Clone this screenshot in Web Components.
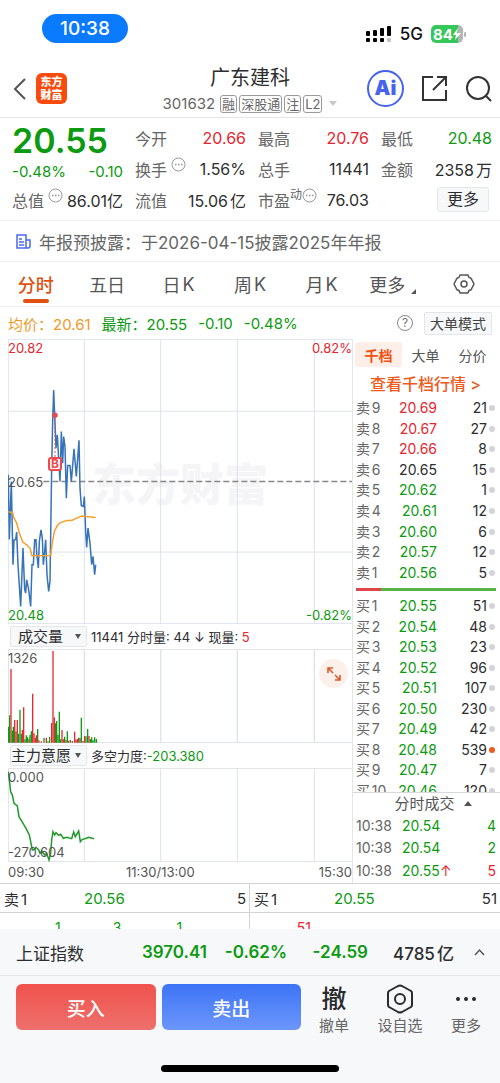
<!DOCTYPE html>
<html lang="zh-CN">
<head>
  <meta charset="utf-8">
  <meta name="viewport" content="width=device-width, initial-scale=1">
  <title>广东建科 301632</title>
  <style>
    :root {
      --up: #e8252f;
      --down: #0c9a10;
      --ink: #2d2d2f;
      --muted: #666;
      --brand: #f0500f;
      --line: #e4e5e8;
      --panel: #f6f8fa;
    }
    body {
      margin: 0;
      min-height: 100vh;
      display: flex;
      flex-direction: column;
      color: var(--ink);
      background: #fff;
      font-family: Inter, "Noto Sans CJK SC", sans-serif;
      font-size: 16px;
    }
    main {
      display: flex;
    }
    .charts {
      flex: 1;
      min-width: 0;
      padding-left: 8px;
    }
    .book {
      flex: 0 0 148px;
      border-left: 1px solid var(--line);
      box-sizing: border-box;
    }
    action-bar {
      flex: 1;
    }
  </style>
</head>
<body>
  <status-bar></status-bar>
  <stock-header code="301632">广东建科</stock-header>
  <quote-panel></quote-panel>
  <notice-bar>年报预披露：于2026-04-15披露2025年年报</notice-bar>
  <period-tabs></period-tabs>
  <average-line></average-line>
  <main>
    <div class="charts">
      <price-chart></price-chart>
      <chart-head options="成交量,成交额" label="副图指标一">11441 分时量: 44 ↓ 现量: <b style="color: var(--up); font-weight: 400">5</b></chart-head>
      <volume-chart></volume-chart>
      <chart-head options="主力意愿,MACD" label="副图指标二">多空力度:<b style="color: var(--down); font-weight: 400">-203.380</b></chart-head>
      <force-chart></force-chart>
      <time-axis></time-axis>
    </div>
    <div class="book">
      <order-book></order-book>
      <tick-list></tick-list>
    </div>
  </main>
  <best-quote></best-quote>
  <index-bar></index-bar>
  <action-bar></action-bar>

  <script>
    (function () {
      const Quotes = {
        sell: [
          [9, "20.69", 21, "up"],
          [8, "20.67", 27, "up"],
          [7, "20.66", 8, "up"],
          [6, "20.65", 15, ""],
          [5, "20.62", 1, "down"],
          [4, "20.61", 12, "down"],
          [3, "20.60", 6, "down"],
          [2, "20.57", 12, "down"],
          [1, "20.56", 5, "down"],
        ],
        buy: [
          [1, "20.55", 51, "down"],
          [2, "20.54", 48, "down"],
          [3, "20.53", 23, "down"],
          [4, "20.52", 96, "down"],
          [5, "20.51", 107, "down"],
          [6, "20.50", 230, "down"],
          [7, "20.49", 42, "down"],
          [8, "20.48", 539, "down"],
          [9, "20.47", 7, "down"],
          [10, "20.46", 120, "down"],
        ],
      };

      // Chart data is kept in the units of each chart's viewBox
      const PRICE =
        "25,420 28,614 34,440 39,690 42,616 47,614 50,592 54,690 62,815 69,640 74,765 77,775 80,735 86,765 92,815 96,690 100,690 104,615 108,615 110,655 115,700 118,620 123,585 127,610 130,690 134,650 137,615 141,720 146,770 150,740 155,400 158,260 161,165 164,240 168,340 172,300 177,390 180,440 184,290 188,385 191,305 195,335 199,490 203,392 210,392 214,440 222,342 229,425 237,316 240,460 244,513 250,515 253,485 257,590 260,638 264,580 270,625 275,690 279,665 284,720 287,690";
      const AVERAGE =
        "25,530 38,535 42,550 50,565 58,595 68,622 80,630 90,640 96,663 152,662 156,630 163,590 172,572 180,564 200,557 215,557 230,550 245,544 287,548";
      const FORCE =
        "25,455 28,480 32,515 37,525 42,550 52,558 57,590 66,605 78,625 88,645 92,665 97,690 104,688 108,682 116,690 120,700 126,693 134,705 140,700 147,720 152,700 155,660 159,635 164,645 168,638 176,646 182,643 190,655 200,652 215,656 221,636 226,650 236,633 241,665 247,658 255,656 266,652 282,656";
      const VOLUME = [
        [26, 320, "d"], [29, 286, "d"], [33, 147, "u"], [37, 332, "d"],
        [40, 320, "d"], [44, 300, "u"], [48, 334, "d"], [52, 300, "u"],
        [56, 341, "d"], [60, 269, "d"], [64, 342, "d"], [67, 330, "u"],
        [71, 262, "u"], [75, 358, "d"], [79, 346, "d"], [83, 352, "d"],
        [87, 358, "u"], [90, 345, "d"], [94, 334, "d"], [98, 221, "u"],
        [102, 340, "u"], [106, 354, "u"], [109, 346, "u"], [113, 327, "d"],
        [117, 361, "u"], [124, 364, "u"], [132, 354, "d"], [139, 353, "u"],
        [144, 364, "d"], [149, 350, "d"], [155, 309, "u"], [159, 93, "u"],
        [163, 292, "u"], [167, 310, "d"], [170, 303, "d"], [174, 344, "d"],
        [178, 275, "d"], [182, 358, "d"], [186, 330, "u"], [190, 358, "u"],
        [194, 350, "d"], [198, 360, "u"], [202, 334, "d"], [206, 362, "u"],
        [211, 360, "d"], [217, 363, "u"], [224, 335, "u"], [228, 359, "u"],
        [232, 357, "u"], [236, 353, "d"], [240, 354, "u"], [244, 293, "d"],
        [249, 363, "u"], [254, 348, "u"], [258, 349, "d"], [263, 327, "d"],
        [267, 348, "u"], [271, 358, "d"], [275, 352, "d"], [279, 360, "d"],
        [284, 352, "d"], [289, 357, "d"],
      ];

      const SHARED = `
        *, :host { box-sizing: border-box; }
        :host { display: block; }
        button, select, input { font: inherit; color: inherit; margin: 0; padding: 0; border: 0; background: none; }
        button { cursor: pointer; }
        a { color: inherit; text-decoration: none; }
        svg { display: block; }
        .up { color: var(--up); }
        .down { color: var(--down); }
      `;

      class Panel extends HTMLElement {
        constructor() {
          super();
          const shadowRoot = this.attachShadow({ mode: "open" });
          shadowRoot.innerHTML = `<style>${SHARED}${this.styles()}</style>${this.markup()}`;
        }
        styles() {
          return "";
        }
        markup() {
          return "";
        }
      }

      class StatusBar extends Panel {
        styles() {
          return `
            :host {
              display: flex;
              justify-content: space-between;
              height: 60px;
              padding: 14px 34px 0 42px;
            }
            time {
              width: 86px;
              height: 29px;
              line-height: 29px;
              border-radius: 15px;
              text-align: center;
              font-size: 19px;
              font-weight: 500;
              color: #fff;
              background: #0a7aff;
            }
            .right {
              display: flex;
              align-items: center;
              gap: 8px;
              height: 40px;
              font-size: 17px;
              font-weight: 500;
              color: #111;
            }
            .battery {
              display: flex;
              align-items: center;
              gap: 1px;
            }
            .level {
              display: flex;
              align-items: center;
              justify-content: center;
              width: 32px;
              height: 18px;
              border-radius: 5px;
              color: #fff;
              font-size: 15px;
              font-weight: 700;
              background: linear-gradient(90deg, #35c759 84%, #b5b5b8 84%);
            }
            .tip {
              width: 2px;
              height: 5px;
              border-radius: 1px;
              background: #b5b5b8;
            }
          `;
        }
        markup() {
          return `
            <time>10:38</time>
            <div class="right">
              <svg width="26" height="18" fill="#000">
                <rect x="0" y="6" width="4" height="5" rx="1"/><rect x="7" y="5" width="4" height="6" rx="1"/>
                <rect x="14" y="3" width="4" height="8" rx="1"/><rect x="21" y="1" width="4" height="10" rx="1"/>
                <rect x="0" y="13" width="4" height="4" rx="1"/><rect x="7" y="13" width="4" height="4" rx="1"/>
                <rect x="14" y="13" width="4" height="4" rx="1"/><rect x="21" y="13" width="4" height="4" rx="1" fill="#c4c4c6"/>
              </svg>
              <span>5G</span>
              <span class="battery">
                <span class="level">84<svg width="8" height="12"><path d="M5 0 0 7h3L2 12l6-7H4z" fill="#fff"/></svg></span>
                <span class="tip"></span>
              </span>
            </div>
          `;
        }
      }

      class StockHeader extends Panel {
        styles() {
          return `
            :host {
              display: grid;
              grid-template-columns: 1fr auto 1fr;
              align-items: center;
              height: 58px;
              padding: 0 8px;
              border-bottom: 1px solid var(--line);
            }
            .left, .right, .sub {
              display: flex;
              align-items: center;
            }
            .left { gap: 9px; padding-left: 5px; }
            .right { gap: 17px; justify-content: flex-end; }
            .logo {
              width: 31px;
              height: 31px;
              padding-top: 2px;
              border-radius: 6px;
              background: #fa4b0c;
              color: #fff;
              font: 900 11px/13px "Noto Sans CJK SC", sans-serif;
              text-align: center;
            }
            .logo span { display: block; }
            h1 {
              margin: 0;
              font-size: 20px;
              font-weight: 400;
              line-height: 30px;
              text-align: center;
            }
            .sub {
              gap: 2px;
              height: 22px;
              color: var(--muted);
              font-size: 15px;
            }
            .code { margin-right: 3px; }
            .sub i {
              padding: 0 1px;
              border: 1px solid #999;
              border-radius: 3px;
              font-style: normal;
              font-size: 13px;
              line-height: 16px;
            }
            .caret {
              margin-left: 5px;
              border: 4px solid transparent;
              border-top: 5px solid #c8c8c8;
              border-bottom: 0;
            }
            .ai {
              display: grid;
              place-items: center;
              width: 37px;
              height: 37px;
              border: 2px solid #4763ee;
              border-radius: 50%;
              color: #4763ee;
              font: 900 20px/33px Inter, sans-serif;
            }
          `;
        }
        markup() {
          return `
            <div class="left">
              <button aria-label="返回"><svg width="14" height="24" fill="none" stroke="#555" stroke-width="2"><path d="M12 2 2 12l10 10"/></svg></button>
              <div class="logo"><span>东方</span><span>财富</span></div>
            </div>
            <div>
              <h1><slot></slot></h1>
              <div class="sub"><span class="code">${this.getAttribute("code")}</span><i>融</i><i>深股通</i><i>注</i><i>L2</i><span class="caret"></span></div>
            </div>
            <div class="right">
              <button class="ai">Ai</button>
              <button aria-label="分享"><svg width="27" height="27" fill="none" stroke="#333" stroke-width="2"><path d="M12 2H2v23h23V15M16 2h9v9M25 2 12 15"/></svg></button>
              <button aria-label="搜索"><svg width="27" height="28" fill="none" stroke="#333" stroke-width="2"><circle cx="13" cy="13" r="11"/><path d="m21 21 5 5"/></svg></button>
            </div>
          `;
        }
      }

      const DOTS = `<svg width="15" height="15" fill="none" stroke="#999"><circle cx="7.500" cy="7.500" r="6.500"/><path d="M4 7.500h1.500M7 7.500h1.500M10 7.500h1.500" stroke-width="1.500"/></svg>`;

      class QuotePanel extends Panel {
        styles() {
          return `
            :host {
              display: grid;
              grid-template-columns: repeat(4, 1fr);
              column-gap: 12px;
              height: 103px;
              padding: 4px 8px 0 12px;
              border-bottom: 1px solid #f0f0f2;
            }
            dl { margin: 0; }
            dl div {
              display: flex;
              justify-content: space-between;
              align-items: center;
              height: 31px;
            }
            dt {
              display: flex;
              gap: 4px;
              color: var(--muted);
            }
            dd {
              margin: 0;
              white-space: nowrap;
              text-autospace: normal;
            }
            sup {
              margin: 0 -4px;
              font-size: 12px;
              line-height: 14px;
            }
            .last div { height: 62px; display: block; }
            .last div ~ div { height: 31px; display: flex; }
            strong {
              display: block;
              font-size: 34px;
              font-weight: 600;
              line-height: 37px;
            }
            .change {
              display: flex;
              justify-content: space-between;
              font-size: 15px;
              line-height: 25px;
            }
            .tight { text-autospace: no-autospace; }
            .end { justify-content: flex-end !important; }
            .more {
              width: 52px;
              height: 25px;
              margin-right: 3px;
              border: 1px solid #e4e6ea;
              border-radius: 3px;
              background: var(--panel);
              line-height: 23px;
            }
          `;
        }
        row(label, value, tone = "") {
          return `<div><dt>${label}</dt><dd class="${tone}">${value}</dd></div>`;
        }
        markup() {
          return `
            <dl class="last">
              <div class="down"><strong>20.55</strong><span class="change"><span>-0.48%</span><span>-0.10</span></span></div>
              ${this.row("总值" + DOTS, "86.01亿", "tight")}
            </dl>
            <dl>
              ${this.row("今开", "20.66", "up")}
              ${this.row("换手" + DOTS, "1.56%")}
              ${this.row("流值", "15.06亿")}
            </dl>
            <dl>
              ${this.row("最高", "20.76", "up")}
              ${this.row("总手", "11441")}
              ${this.row("市盈<sup>动</sup>" + DOTS, "76.03")}
            </dl>
            <dl>
              ${this.row("最低", "20.48", "down")}
              ${this.row("金额", "2358万")}
              <div class="end"><button class="more">更多</button></div>
            </dl>
          `;
        }
      }

      class NoticeBar extends Panel {
        styles() {
          return `
            :host {
              display: flex;
              align-items: center;
              gap: 8px;
              height: 41px;
              padding: 0 16px;
              border-bottom: 1px solid #f0f0f2;
              color: var(--muted);
              font-size: 17px;
            }
          `;
        }
        markup() {
          return `
            <svg width="15" height="15" fill="none" stroke="#4a68f0" stroke-width="1.500">
              <path d="M1 1h9v13H1zM10 6h4v6q0 2-2 2h-2M3 5h3M3 8h5M3 11h5"/>
            </svg>
            <span><slot></slot></span>
          `;
        }
      }

      class PeriodTabs extends Panel {
        styles() {
          return `
            :host { border-bottom: 1px solid #f0f0f2; }
            nav {
              display: grid;
              grid-template-columns: repeat(7, 1fr);
              height: 44px;
            }
            button {
              display: flex;
              justify-content: center;
              align-items: center;
              gap: 2px;
              position: relative;
              font-size: 18px;
              color: #555;
            }
            .on {
              color: #e0500f;
              font-weight: 500;
            }
            .on::after {
              content: "";
              position: absolute;
              bottom: 3px;
              width: 26px;
              height: 4px;
              border-radius: 2px;
              background: #e0500f;
            }
            .corner {
              align-self: flex-end;
              margin: 0 0 12px 4px;
              border-left: 5px solid transparent;
              border-bottom: 5px solid #555;
            }
          `;
        }
        markup() {
          return `
            <nav>
              <button class="on">分时</button>
              <button>五日</button>
              <button><span>日</span><span>K</span></button>
              <button><span>周</span><span>K</span></button>
              <button><span>月</span><span>K</span></button>
              <button>更多<span class="corner"></span></button>
              <button aria-label="设置">
                <svg width="22" height="22" viewBox="0 0 22 22" fill="none" stroke="#555" stroke-width="1.500" stroke-linejoin="round">
                  <path d="M7 2h8q.5 3 3 3.200L21 11l-3 5.800q-2.500.2-3 3.200H7q-.5-3-3-3.200L1 11l3-5.800Q6.500 5 7 2z"/><circle cx="11" cy="11" r="3"/>
                </svg>
              </button>
            </nav>
          `;
        }
      }

      class AverageLine extends Panel {
        styles() {
          return `
            :host {
              display: flex;
              align-items: center;
              gap: 11px;
              height: 32px;
              padding: 0 8px;
              font-size: 15px;
            }
            .avg { color: #f09a26; }
            .help {
              width: 16px;
              height: 16px;
              margin-left: auto;
              border: 1px solid #888;
              border-radius: 50%;
              color: #777;
              font-size: 12px;
              line-height: 14px;
            }
            .mode {
              height: 23px;
              padding: 0 5px;
              border: 1px solid #e4e6ea;
              border-radius: 2px;
              background: var(--panel);
              color: #444;
              font-size: 14px;
              line-height: 21px;
            }
          `;
        }
        markup() {
          return `
            <span class="avg">均价：20.61</span>
            <span class="down">最新：20.55</span>
            <span class="down">-0.10</span>
            <span class="down">-0.48%</span>
            <button class="help">?</button>
            <button class="mode">大单模式</button>
          `;
        }
      }

      const CHART = `
        :host {
          position: relative;
          color: #555;
          font-size: 13px;
          line-height: 16px;
        }
        svg { width: 100%; }
        svg * { vector-effect: non-scaling-stroke; }
        .grid { fill: none; stroke: #dde2ec; }
        span { position: absolute; left: 0; }
        .end { left: auto; right: 0; }
        .top { top: 0; }
        .bottom { bottom: 0; }
      `;

      class PriceChart extends Panel {
        styles() {
          return `
            ${CHART}
            svg { position: relative; height: 285px; }
            .top { top: 1px; }
            .mid { top: 135px; }
            .bottom { bottom: 1px; }
            .mark {
              inset: 0;
              display: grid;
              place-items: center;
              color: #f5f5f7;
              font: 900 44px/60px "Noto Sans CJK SC", sans-serif;
            }
            .buy {
              top: 118px;
              left: 40px;
              width: 14px;
              height: 14px;
              border: 2px solid #ee4a50;
              border-radius: 3px;
              background: #fff;
              color: #ee4a50;
              font-size: 12px;
              font-weight: 700;
              line-height: 10px;
              text-align: center;
            }
          `;
        }
        markup() {
          return `
            <span class="mark">东方财富</span>
            <svg viewBox="24 12 1032 856" preserveAspectRatio="none" fill="none">
              <path class="grid" d="M25 12V868M253 12V868M482 12V868M712 12V868M943 12V868M24 13H1056M24 229H1056M24 652H1056M24 867H1056"/>
              <path d="M130 440H1056" stroke="#888" stroke-width="1.500" stroke-dasharray="6 3"/>
              <polyline points="${PRICE}" stroke="#3673b8" stroke-width="1.500"/>
              <polyline points="${AVERAGE}" stroke="#f5a02c" stroke-width="1.500"/>
              <path d="M165 240V370" stroke="#e8474f" stroke-dasharray="2 2"/>
              <circle cx="165" cy="241" r="8" fill="#e8474f"/>
            </svg>
            <span class="top up">20.82</span>
            <span class="top end up">0.82%</span>
            <span class="mid">20.65</span>
            <span class="bottom down">20.48</span>
            <span class="bottom end down">-0.82%</span>
            <span class="buy">B</span>
          `;
        }
      }

      class ChartHead extends Panel {
        styles() {
          return `
            :host {
              display: flex;
              align-items: center;
              gap: 4px;
              height: 26px;
              border-bottom: 1px solid var(--line);
              font-size: 13px;
              white-space: nowrap;
            }
            label {
              display: grid;
              flex: 0 0 77px;
              margin-left: 2px;
              align-items: center;
            }
            select, i { grid-area: 1 / 1; }
            select {
              appearance: none;
              width: 77px;
              height: 21px;
              padding-right: 16px;
              border: 1px solid #e4e6ea;
              border-radius: 2px;
              background: var(--panel);
              font-size: 15px;
              line-height: 19px;
              text-align-last: center;
            }
            i {
              justify-self: end;
              margin-right: 6px;
              border: 3px solid transparent;
              border-top: 5px solid #555;
              border-bottom: 0;
              pointer-events: none;
            }
          `;
        }
        markup() {
          const options = this.getAttribute("options").split(",");
          return `
            <label>
              <select aria-label="${this.getAttribute("label")}">
                ${options.map((name) => `<option>${name}</option>`).join("")}
              </select><i></i>
            </label>
            <div><slot></slot></div>
          `;
        }
      }

      class VolumeChart extends Panel {
        styles() {
          return `
            ${CHART}
            svg { height: 93px; }
            button {
              position: absolute;
              top: 9px;
              right: 4px;
              display: grid;
              place-items: center;
              width: 29px;
              height: 29px;
              border-radius: 50%;
              background: #fdf0ea;
            }
            button svg { width: 16px; height: 16px; }
          `;
        }
        markup() {
          const bars = VOLUME.map(
            ([x, top, side]) =>
              `<path d="M${x} 368V${top}" stroke="${side === "u" ? "#e8252f" : "#0c9a10"}"/>`
          ).join("");
          return `
            <svg viewBox="24 90 1032 279" preserveAspectRatio="none" stroke-width="1.300">
              <path class="grid" d="M25 90V369M253 90V369M482 90V369M712 90V369M943 90V369M24 368H1056"/>
              ${bars}
            </svg>
            <span class="top">1326</span>
            <button aria-label="全屏">
              <svg viewBox="0 0 16 16" fill="none" stroke="#dd5a2a" stroke-width="1.600"><path d="M2 7V2h5M2 2l5 5M14 9v5H9M14 14l-5-5"/></svg>
            </button>
          `;
        }
      }

      class ForceChart extends Panel {
        styles() {
          return `
            ${CHART}
            svg { height: 93px; }
            .bottom { bottom: 2px; }
          `;
        }
        markup() {
          return `
            <svg viewBox="24 447 1032 279" preserveAspectRatio="none" fill="none">
              <path class="grid" d="M25 447V726M253 447V726M482 447V726M712 447V726M943 447V726M24 725H1056"/>
              <polyline points="${FORCE}" stroke="#1f9a2a" stroke-width="1.500"/>
            </svg>
            <span class="top">0.000</span>
            <span class="bottom">-270.604</span>
          `;
        }
      }

      class TimeAxis extends Panel {
        // The midday label is centred on the second grid line
        styles() {
          return `
            :host {
              display: grid;
              grid-template-columns: 3fr auto 4fr;
              height: 21px;
              color: #555;
              font-size: 13px;
              line-height: 21px;
            }
            span:last-child { text-align: right; }
          `;
        }
        markup() {
          return `<span>09:30</span><span>11:30/13:00</span><span>15:30</span>`;
        }
      }

      class OrderBook extends Panel {
        styles() {
          return `
            :host { padding: 3px 4px 0 2px; }
            nav {
              display: grid;
              grid-template-columns: repeat(3, 1fr);
              height: 25px;
            }
            nav button {
              border-radius: 3px;
              color: #555;
              font-size: 14px;
            }
            nav .on {
              background: #fdeee8;
              color: var(--brand);
              font-weight: 700;
            }
            .all {
              display: block;
              height: 31px;
              color: #ee5a1c;
              font-size: 16px;
              font-weight: 500;
              line-height: 34px;
              text-align: center;
            }
            table {
              width: 100%;
              height: 185px;
              border-collapse: collapse;
              table-layout: fixed;
              font-size: 14px;
              line-height: 16px;
            }
            th, td { padding: 0; }
            th {
              width: 39px;
              padding-left: 1px;
              color: var(--muted);
              font-weight: 400;
              text-align: left;
              text-autospace: normal;
              white-space: nowrap;
            }
            td { width: 43px; text-align: right; }
            td:last-child { width: auto; }
            td:last-child::after {
              content: "";
              display: inline-block;
              width: 6px;
              height: 6px;
              margin: 0 1px 2px 2px;
              border-radius: 50%;
              background: #d4d4d8;
            }
            .big td:last-child::after { background: #ee5a1c; }
            .ratio {
              height: 3px;
              margin: 5px 0 5px 1px;
              background: linear-gradient(90deg, #e0474c 18%, #58b447 18%);
            }
            .clip {
              height: 196px;
              overflow: hidden;
            }
            .clip table { height: 205px; }
          `;
        }
        table(side, name) {
          const rows = Quotes[side]
            .map(
              ([level, price, count, tone]) => `
                <tr class="${count > 500 ? "big" : ""}">
                  <th scope="row">${name}${level}</th><td class="${tone}">${price}</td><td>${count}</td>
                </tr>`
            )
            .join("");
          return `<table>${rows}</table>`;
        }
        markup() {
          return `
            <nav><button class="on">千档</button><button>大单</button><button>分价</button></nav>
            <a class="all" href="#depth">查看千档行情 &gt;</a>
            ${this.table("sell", "卖")}
            <div class="ratio"></div>
            <div class="clip">${this.table("buy", "买")}</div>
          `;
        }
      }

      class TickList extends Panel {
        styles() {
          return `
            :host {
              border-top: 1px solid #d8d8dc;
              padding: 0 4px 0 3px;
            }
            button {
              display: flex;
              justify-content: center;
              align-items: center;
              gap: 9px;
              width: 100%;
              height: 21px;
              padding-left: 14px;
              color: #555;
              font-size: 15px;
              line-height: 20px;
            }
            i {
              border: 4px solid transparent;
              border-bottom: 5px solid #555;
              border-top: 0;
            }
            table {
              width: 100%;
              height: 68px;
              border-collapse: collapse;
              font-size: 14px;
            }
            td { padding: 0; }
            td:first-child { width: 46px; color: var(--muted); }
            td:last-child { text-align: right; }
          `;
        }
        markup() {
          return `
            <button>分时成交<i></i></button>
            <table>
              <tr><td>10:38</td><td class="down">20.54</td><td class="down">4</td></tr>
              <tr><td>10:38</td><td class="down">20.54</td><td class="down">2</td></tr>
              <tr><td>10:38</td><td class="down">20.55<span class="up">↑</span></td><td class="up">5</td></tr>
            </table>
          `;
        }
      }

      class BestQuote extends Panel {
        styles() {
          return `
            :host {
              display: grid;
              grid-template-columns: 1fr 1fr;
              height: 46px;
              overflow: hidden;
              border-top: 1px solid #d4d4d8;
              font-size: 15px;
            }
            section:first-of-type { border-right: 1px solid #d4d4d8; }
            .best {
              display: grid;
              grid-template-columns: 80px 1fr auto;
              align-items: center;
              height: 29px;
              padding: 0 3px 0 4px;
              border-bottom: 1px solid #d4d4d8;
              text-autospace: normal;
            }
            .queue {
              display: grid;
              grid-template-columns: repeat(4, 1fr);
              padding: 4px 6px 0 0;
              font-size: 14px;
              line-height: 22px;
              text-align: right;
            }
          `;
        }
        markup() {
          return `
            <section>
              <div class="best"><span>卖1</span><span class="down">20.56</span><span>5</span></div>
              <div class="queue down"><span>1</span><span>3</span><span>1</span></div>
            </section>
            <section>
              <div class="best"><span>买1</span><span class="down">20.55</span><span>51</span></div>
              <div class="queue up"><span>51</span></div>
            </section>
          `;
        }
      }

      class IndexBar extends Panel {
        styles() {
          return `
            :host {
              display: grid;
              grid-template-columns: 1fr 80px 80px 81px 86px 31px;
              align-items: center;
              height: 47px;
              padding: 0 15px 0 16px;
              border-bottom: 1px solid #e4e6ea;
              background: var(--panel);
              font-size: 17px;
              text-align: right;
              text-autospace: normal;
            }
            .name { text-align: left; }
            .down { font-weight: 600; }
            .turnover { font-weight: 500; }
            button { justify-self: end; }
          `;
        }
        markup() {
          return `
            <span class="name">上证指数</span>
            <span class="down">3970.41</span>
            <span class="down">-0.62%</span>
            <span class="down">-24.59</span>
            <span class="turnover">4785亿</span>
            <button aria-label="展开"><svg width="11" height="8" fill="none" stroke="#555" stroke-width="1.500"><path d="m1 7 4.500-5L10 7"/></svg></button>
          `;
        }
      }

      class ActionBar extends Panel {
        styles() {
          return `
            :host {
              display: flex;
              flex-direction: column;
              justify-content: space-between;
              padding: 8px 0 11px;
              background: var(--panel);
            }
            .row {
              display: flex;
              padding: 0 1px 0 16px;
            }
            .trade {
              flex: 1;
              display: grid;
              grid-template-columns: 1fr 1fr;
              gap: 6px;
            }
            .trade button {
              height: 46px;
              border-radius: 6px;
              color: #fff;
              font-size: 19px;
              font-weight: 500;
            }
            .buy { background: linear-gradient(#f0524d, #ee706c); }
            .sell { background: linear-gradient(#3d74f6, #6c96fb); }
            .tool {
              display: flex;
              flex-direction: column;
              align-items: center;
              width: 66px;
              color: var(--muted);
              font-size: 15px;
              line-height: 24px;
            }
            .icon {
              display: grid;
              place-items: center;
              height: 30px;
              color: #2b2b2d;
              font-size: 25px;
              font-weight: 500;
              line-height: 30px;
            }
            .home {
              width: 178px;
              height: 7px;
              margin: 0 auto;
              border-radius: 4px;
              background: #000;
            }
          `;
        }
        markup() {
          return `
            <div class="row">
              <div class="trade"><button class="buy">买入</button><button class="sell">卖出</button></div>
              <button class="tool"><span class="icon">撤</span>撤单</button>
              <button class="tool">
                <span class="icon"><svg width="28" height="30" fill="none" stroke="#2b2b2d" stroke-width="2" stroke-linejoin="round"><path d="M12 2q2-1 4 0l9 5q1 1 1 2v12q0 1-1 2l-9 5q-2 1-4 0l-9-5q-1-1-1-2V9q0-1 1-2z"/><circle cx="14" cy="15" r="5"/></svg></span>设自选
              </button>
              <button class="tool">
                <span class="icon"><svg width="22" height="6" fill="#2b2b2d"><circle cx="3" cy="3" r="2"/><circle cx="11" cy="3" r="2"/><circle cx="19" cy="3" r="2"/></svg></span>更多
              </button>
            </div>
            <div class="home"></div>
          `;
        }
      }

      customElements.define("status-bar", StatusBar);
      customElements.define("stock-header", StockHeader);
      customElements.define("quote-panel", QuotePanel);
      customElements.define("notice-bar", NoticeBar);
      customElements.define("period-tabs", PeriodTabs);
      customElements.define("average-line", AverageLine);
      customElements.define("price-chart", PriceChart);
      customElements.define("chart-head", ChartHead);
      customElements.define("volume-chart", VolumeChart);
      customElements.define("force-chart", ForceChart);
      customElements.define("time-axis", TimeAxis);
      customElements.define("order-book", OrderBook);
      customElements.define("tick-list", TickList);
      customElements.define("best-quote", BestQuote);
      customElements.define("index-bar", IndexBar);
      customElements.define("action-bar", ActionBar);
    })();
  </script>
</body>
</html>
